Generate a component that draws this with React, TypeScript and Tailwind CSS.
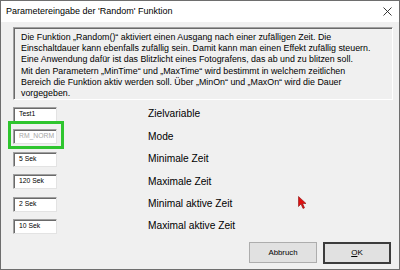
import React from 'react';

const rows = [
  { value: 'Test1', label: 'Zielvariable' },
  { value: 'RM_NORM', label: 'Mode', disabled: true, marked: true },
  { value: '5 Sek', label: 'Minimale Zeit' },
  { value: '120 Sek', label: 'Maximale Zeit' },
  { value: '2 Sek', label: 'Minimal aktive Zeit' },
  { value: '10 Sek', label: 'Maximal aktive Zeit' },
];

const Field: React.FC<{ value: string; disabled?: boolean }> = ({ value, disabled }) => (
  <div
    className={`w-[44px] h-[15px] bg-white border border-t-[#a0a0a0] border-l-[#a0a0a0] border-r-[#e3e3e3] border-b-[#e3e3e3] shadow-[inset_1px_1px_0_#6a6a6a] pl-[5px] flex items-center text-[6.8px] leading-none whitespace-nowrap ${
      disabled ? 'text-[#a6a6a6]' : 'text-black'
    }`}
  >
    {value}
  </div>
);

export default function App() {
  return (
    <div
      className="relative w-[400px] h-[270px] bg-[#f0f0f0] border border-[#6e6e6e] flex flex-col text-black"
      style={{ fontFamily: '"Liberation Sans", Arial, sans-serif' }}
    >
      {/* title bar */}
      <div className="h-[21px] bg-white flex items-center justify-between pl-[5px] pr-[6px]">
        <span className="text-[9px]">Parametereingabe der 'Random' Funktion</span>
        <svg width="9" height="9" viewBox="0 0 9 9" className="mr-[1px]">
          <path d="M0.5 0.5 L8.5 8.5 M8.5 0.5 L0.5 8.5" stroke="#222" strokeWidth="0.9" />
        </svg>
      </div>

      <div className="flex-1 flex flex-col pt-[5px] pl-[12px] pr-[6px]">
        {/* description */}
        <div className="h-[73px] border border-t-[#a0a0a0] border-l-[#a0a0a0] border-r-white border-b-white shadow-[inset_1px_1px_0_#6a6a6a] pl-[7px] pt-[4px] text-[8.85px] leading-[11.2px]">
          Die Funktion „Random()“ aktiviert einen Ausgang nach einer zufälligen Zeit. Die
          <br />
          Einschaltdauer kann ebenfalls zufällig sein. Damit kann man einen Effekt zufällig steuern.
          <br />
          Eine Anwendung dafür ist das Blitzlicht eines Fotografens, das ab und zu blitzen soll.
          <br />
          Mit den Parametern „MinTime“ und „MaxTime“ wird bestimmt in welchem zeitlichen
          <br />
          Bereich die Funktion aktiv werden soll. Über „MinOn“ und „MaxOn“ wird die Dauer
          <br />
          vorgegeben.
        </div>

        {/* parameter rows */}
        <div className="mt-[7px] flex flex-col gap-[7.4px]">
          {rows.map((r) => (
            <div key={r.label} className="flex items-center h-[15px]">
              <div className="relative">
                <Field value={r.value} disabled={r.disabled} />
                {r.marked && (
                  <div className="absolute -left-[5px] -top-[8px] w-[56px] h-[28px] border-[3px] border-[#2ec52e]" />
                )}
              </div>
              <span className="ml-[91px] text-[10.2px] leading-none">{r.label}</span>
            </div>
          ))}
        </div>

        {/* buttons */}
        <div className="mt-[8px] flex justify-end gap-[6px] pr-[2px]">
          <button
            type="button"
            className="w-[68px] h-[21px] bg-[#e1e1e1] border border-[#adadad] text-[7.8px]"
          >
            Abbruch
          </button>
          <button
            type="button"
            className="w-[68px] h-[22px] bg-[#e1e1e1] border-2 border-[#3c3c3c] text-[8px]"
          >
            <span className="underline">O</span>K
          </button>
        </div>
      </div>

      {/* mouse pointer */}
      <svg className="absolute left-[297px] top-[195px]" width="9" height="13" viewBox="0 0 9 13">
        <path d="M0.5 0.5 L0.5 10.5 L3 8 L5 12.5 L6.5 11.8 L4.6 7.5 L8 7.5 Z" fill="#e01010" stroke="#8a1010" strokeWidth="0.6" />
      </svg>
    </div>
  );
}
